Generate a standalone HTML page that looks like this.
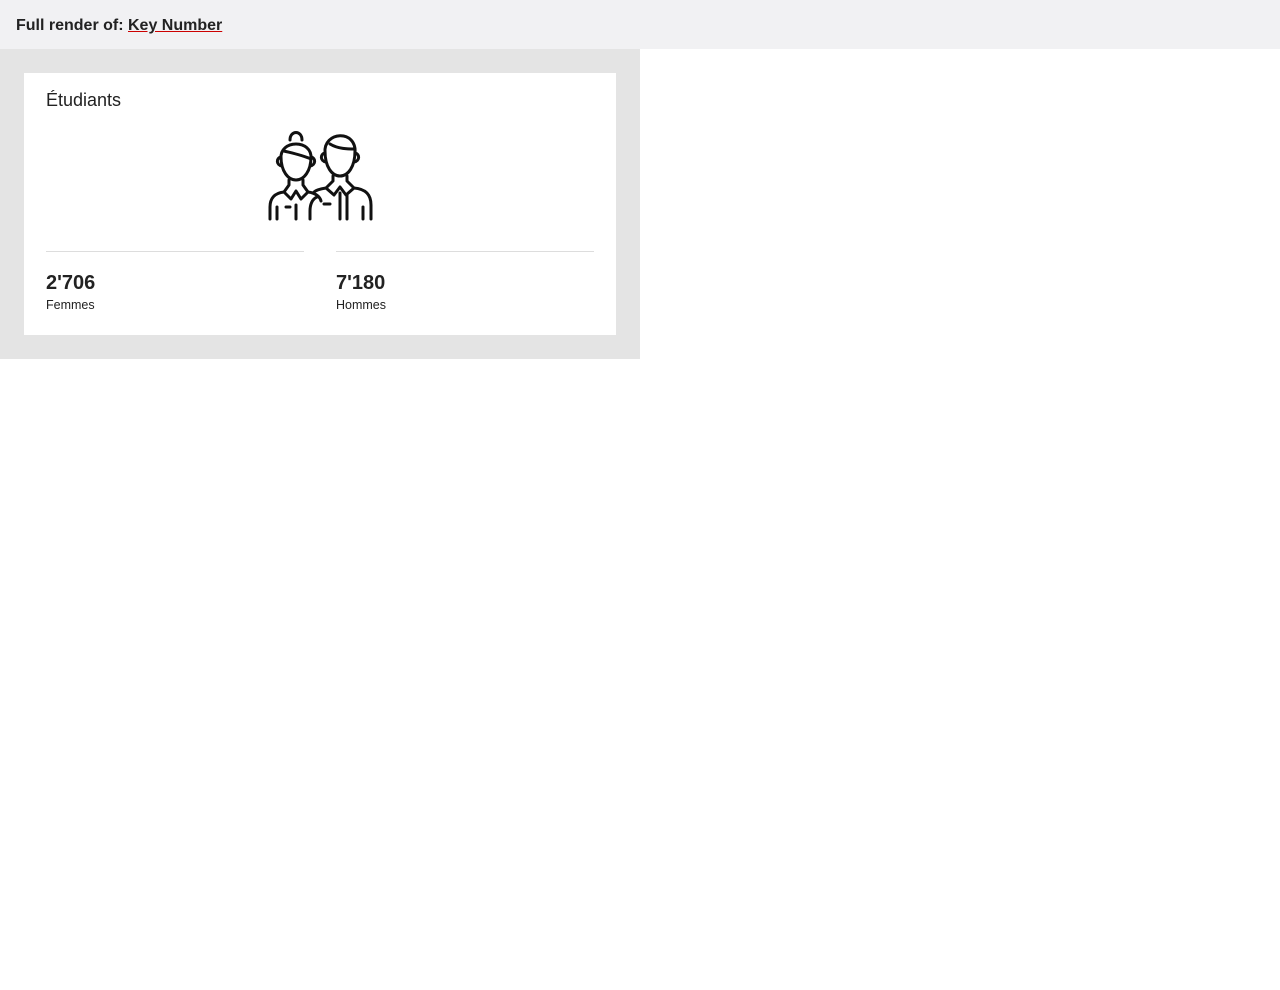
<!DOCTYPE html>
<html><head><meta charset="utf-8"><style>
*{margin:0;padding:0;box-sizing:border-box}
body{width:1280px;height:990px;background:#fff;font-family:"Liberation Sans",Arial,sans-serif;color:#222;position:relative}
.top{height:49px;background:#f1f1f3;padding:17px 16px 0;font-weight:bold;font-size:16px;color:#222}
.top a{color:#222;text-decoration:underline;text-decoration-color:#c00}
.wrap{position:absolute;left:0;top:49px;width:640px;height:310px;background:#e4e4e4}
.card{position:absolute;left:24px;top:24px;width:592px;height:262px;background:#fff}
.title{position:absolute;left:22px;top:17px;font-size:18px;color:#222}
.col{position:absolute;top:178px;width:258px;border-top:1px solid #ddd}
.num{position:absolute;top:20px;font-size:20px;font-weight:bold;color:#222}
.lab{position:absolute;top:46px;font-size:12.5px;color:#222}
svg{position:absolute;left:236px;top:52px}
</style></head><body>
<div class="top">Full render of: <a>Key Number</a></div>
<div class="wrap"><div class="card">
<div class="title">Étudiants</div>
<svg width="120" height="100" viewBox="0 0 120 100" fill="none" stroke="#111" stroke-width="3" stroke-linecap="round" stroke-linejoin="round">
<path d="M30 15 C30 5 42 5 42 15"/>
<path d="M21 34 C19 14 53 14 51 34"/>
<path d="M21 32 C21 46 28 55 36 55 C44 55 51 46 51 32"/>
<path d="M24 26 C32 28 42 30 51 34"/>
<path d="M21 32 C16 33 16 40 22 41 M51 32 C56 33 56 40 50 41"/>
<path d="M29 55 V60 L24 67 L31 74 L36 66 L41 74 L48 67 L43 60 V55"/>
<path d="M24 67 C14 68 10 74 10 82 V94 M48 67 C56 68 60 72 61 76 M17 82 V94 M36 80 V94 M26 82 H30"/>
<path d="M65 28 C63 6 97 4 95 28"/>
<path d="M65 26 C65 42 72 51 80 51 C88 51 95 42 95 26"/>
<path d="M70 19 C78 24 88 24 95 24"/>
<path d="M65 28 C60 29 60 36 66 37 M95 28 C100 29 100 36 94 37"/>
<path d="M73 51 V56 L66 63 L74 70 L80 62 L86 70 L94 63 L87 56 V51"/>
<path d="M66 63 C60 64 56 65 54 67 M94 63 C106 64 111 70 111 80 V94 M57 72 C52 74 50 80 50 86 V94 M80 68 V94 M87 70 V94 M103 82 V94 M64 79 H70"/>
</svg>
<div class="col" style="left:22px"><div class="num">2'706</div><div class="lab">Femmes</div></div>
<div class="col" style="left:312px"><div class="num">7'180</div><div class="lab">Hommes</div></div>
</div></div>
</body></html>
